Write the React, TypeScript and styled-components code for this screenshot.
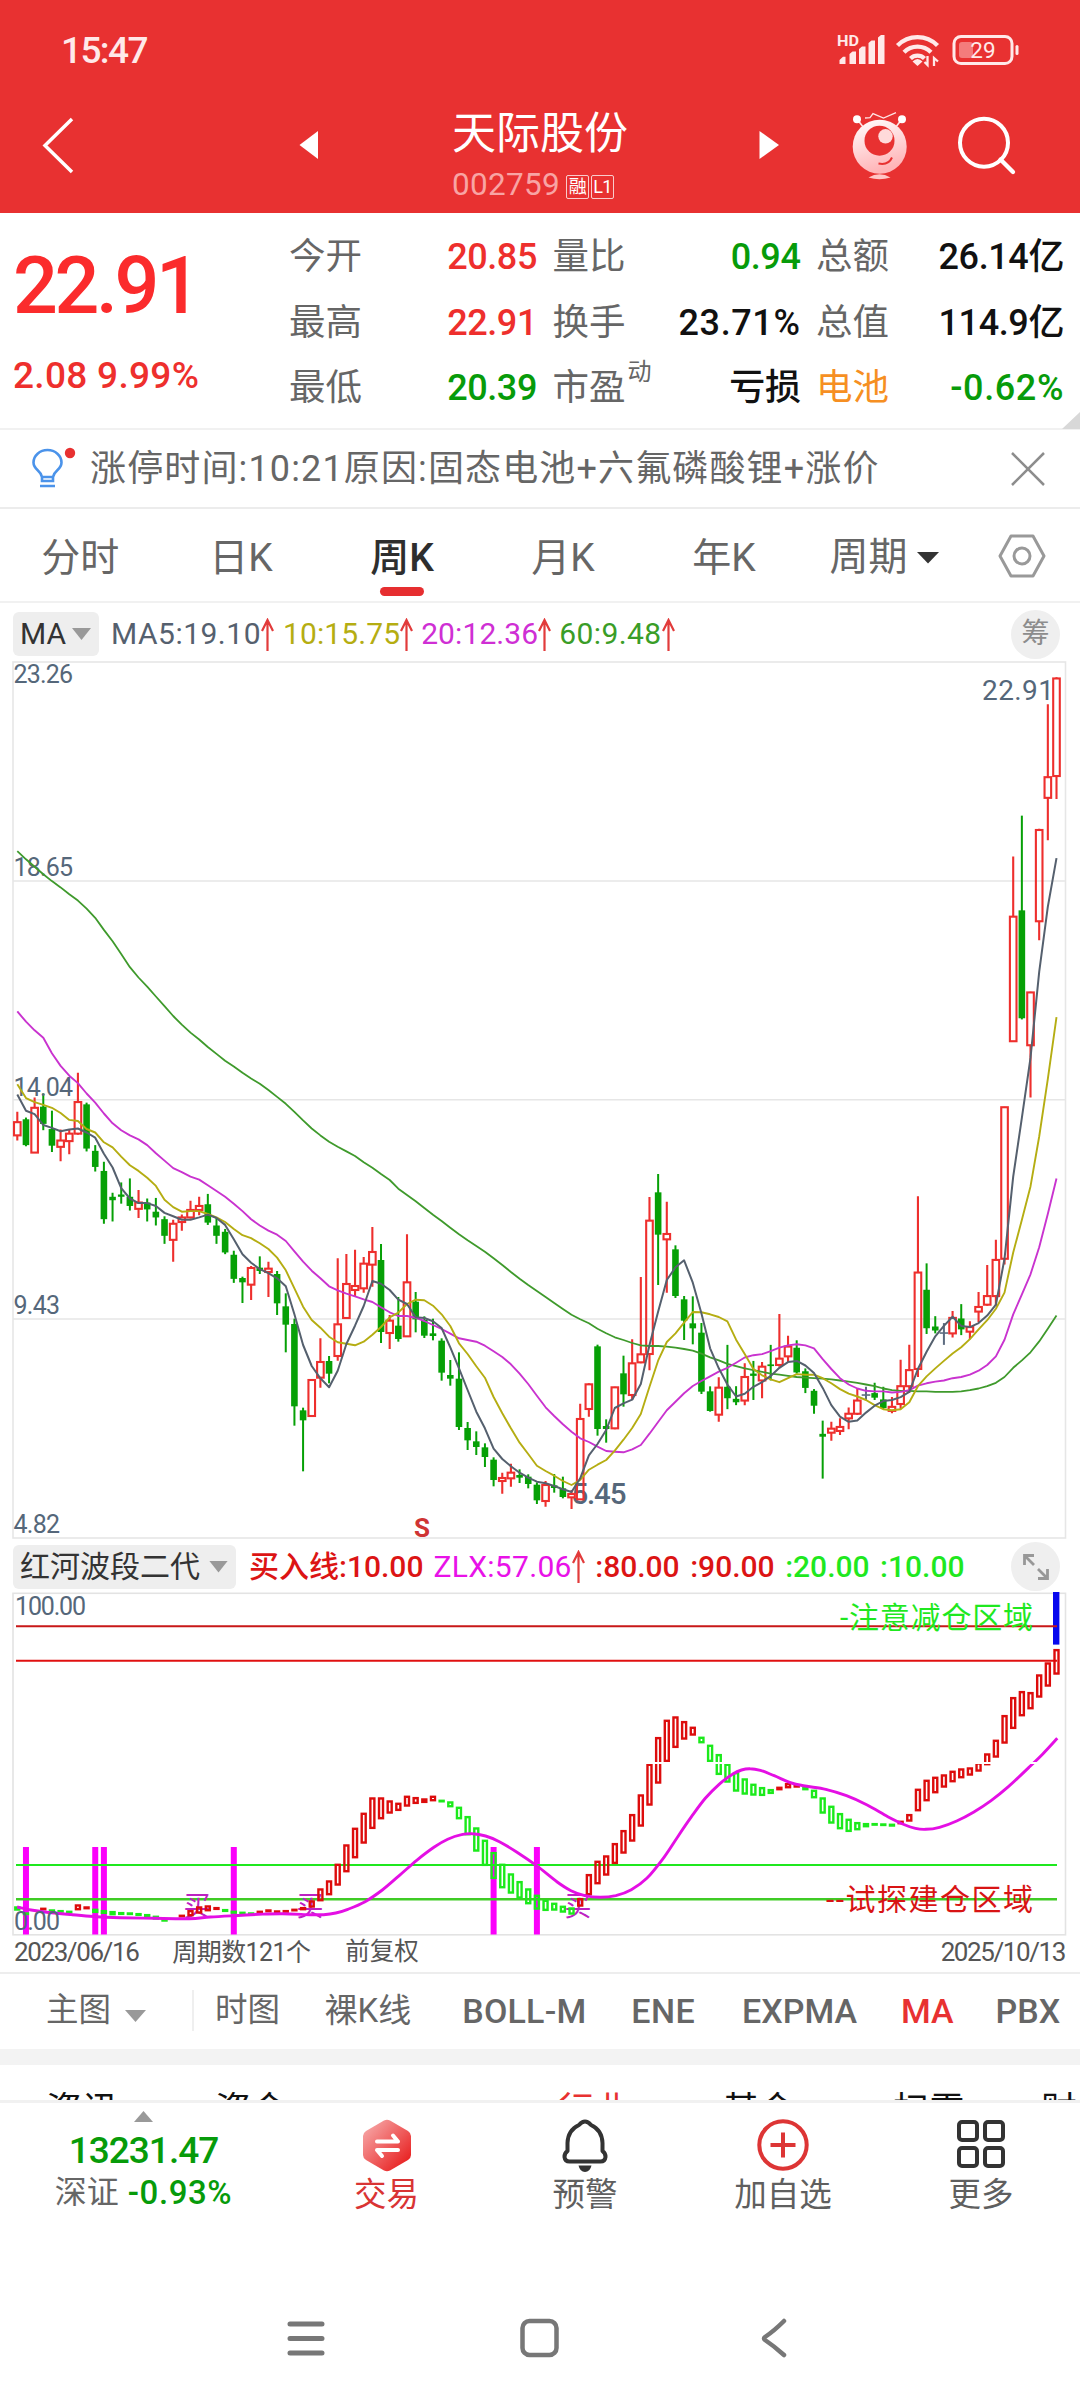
import React from "react";
import styled, { createGlobalStyle } from "styled-components";

const RED = "#e83131";
const UP = "#ee2f2d";
const DOWN = "#079b0a";
const SLATE = "#55606e";

const GlobalStyle = createGlobalStyle`
  * { box-sizing: border-box; }
  body { margin: 0; background: #fff; }
  body, svg text { font-family: Roboto, "Noto Sans CJK SC", sans-serif; }
`;

/* ---------- shared ---------- */

const Screen = styled.main`
  width: 1080px;
  height: 2400px;
  overflow: hidden;
  display: flex;
  flex-direction: column;
  background: #fff;
  color: #333;
  line-height: 1;
  white-space: nowrap;
`;

const Text = styled.span<{ $size: number; $color?: string; $ls?: number; $weight?: number; $left?: number }>`
  font-size: ${(p) => p.$size}px;
  color: ${(p) => p.$color ?? "inherit"};
  letter-spacing: ${(p) => p.$ls ?? 0}px;
  font-weight: ${(p) => p.$weight ?? 400};
  margin-left: ${(p) => p.$left ?? 0}px;
`;

const Caret = styled.i<{ $w: number; $h: number; $color: string; $up?: boolean }>`
  flex: none;
  width: ${(p) => p.$w}px;
  height: ${(p) => p.$h}px;
  background: ${(p) => p.$color};
  clip-path: ${(p) => (p.$up ? "polygon(50% 0, 100% 100%, 0 100%)" : "polygon(0 0, 100% 0, 50% 100%)")};
`;

/* ---------- header ---------- */

const Header = styled.header`
  flex: none;
  height: 213px;
  background: ${RED};
  color: #fff;
`;

const StatusBar = styled.div`
  height: 100px;
  padding: 0 59px 0 61px;
  display: flex;
  align-items: center;
  justify-content: space-between;
`;

const TitleBar = styled.div`
  height: 113px;
  display: grid;
  grid-template-columns: 299px 153px 176px 131px 321px;
`;

const BackCell = styled.div`
  padding: 16px 0 0 42px;
`;

const ArrowCell = styled.div`
  padding-top: 31px;
`;

const TitleCell = styled.div`
  display: flex;
  flex-direction: column;
  padding-top: 12px;
`;

const CodeRow = styled.div`
  display: flex;
  align-items: center;
  gap: 2px;
  margin-top: 13px;
  height: 31px;
`;

const Badge = styled.span`
  width: 23px;
  height: 24px;
  margin-top: 4px;
  border: 1.5px solid rgba(255, 255, 255, 0.75);
  border-radius: 2px;
  font-size: 18px;
  line-height: 21px;
  text-align: center;
  letter-spacing: -0.5px;
  color: #fff;
`;

/* ---------- quote ---------- */

const Quote = styled.section`
  flex: none;
  position: relative;
  height: 217px;
  padding-top: 11.5px;
  display: grid;
  grid-template-columns: 289px 775px;
  border-bottom: 2px solid #f1f1f1;
`;

const PriceBox = styled.div`
  color: #fb2b2c;
  padding: 22px 0 0 13px;
  display: flex;
  flex-direction: column;
  gap: 31px;
`;

const Stats = styled.div`
  display: grid;
  grid-template-columns: repeat(3, 248px);
  grid-auto-rows: 65.5px;
  column-gap: 15.5px;
`;

const Stat = styled.div`
  display: flex;
  align-items: center;
  justify-content: space-between;
  font-size: 36.5px;
`;

const StatLabel = styled.span<{ $color?: string }>`
  display: flex;
  color: ${(p) => p.$color ?? "#666"};
`;

const Superscript = styled.span`
  height: 24px;
  margin: -10px 0 0 2px;
  font-size: 24px;
`;

const StatValue = styled.span<{ $color: string; $ls: number }>`
  color: ${(p) => p.$color};
  font-size: 36px;
  font-weight: 500;
  letter-spacing: ${(p) => p.$ls}px;
`;

const Corner = styled.i`
  position: absolute;
  right: 0;
  bottom: -1px;
  width: 18px;
  height: 17px;
  background: #d8d8d8;
  clip-path: polygon(100% 0, 100% 100%, 0 100%);
`;

/* ---------- notice + period tabs ---------- */

const Notice = styled.section`
  flex: none;
  height: 79px;
  padding: 1px 34px 0 31px;
  display: flex;
  align-items: center;
  border-bottom: 2px solid #ececec;
  > svg:last-child { margin-left: auto; }
`;

const Periods = styled.nav`
  flex: none;
  height: 94px;
  display: grid;
  grid-template-columns: 160.5px 161px 161px 161px 161px 161px 114.5px;
  border-bottom: 2px solid #f1f1f1;
`;

const Period = styled.div<{ $active?: boolean }>`
  display: flex;
  flex-direction: column;
  align-items: center;
  padding-top: 30px;
  font-size: 39px;
  color: ${(p) => (p.$active ? "#2e2e2e" : "#666")};
  font-weight: ${(p) => (p.$active ? 500 : 400)};
  &::after {
    content: "";
    width: 44px;
    height: 9px;
    border-radius: 5px;
    margin-top: 9px;
    background: ${(p) => (p.$active ? "#e62e30" : "transparent")};
  }
`;

const PeriodMenu = styled.div`
  display: flex;
  align-items: center;
  gap: 9px;
  padding: 5px 0 0 25px;
  font-size: 39px;
  color: #666;
`;

const SettingCell = styled.div`
  display: flex;
  align-items: center;
  padding: 1px 0 0 32px;
`;

/* ---------- chart legends ---------- */

const Legend = styled.div<{ $h: number; $top: number }>`
  flex: none;
  height: ${(p) => p.$h}px;
  padding: ${(p) => p.$top}px 20px 0 13px;
  display: flex;
  align-items: center;
  > :last-child { margin-left: auto; }
`;

const Picker = styled.div<{ $w: number }>`
  width: ${(p) => p.$w}px;
  height: 44px;
  padding: 0 8px 0 7px;
  display: flex;
  align-items: center;
  justify-content: space-between;
  border-radius: 6px;
  background: #eee;
  font-size: 30px;
`;

const Round = styled.div`
  width: 49px;
  height: 49px;
  border-radius: 50%;
  background: #efefef;
  display: flex;
  align-items: center;
  justify-content: center;
  font-size: 28px;
  color: #8c8c8c;
`;

const Chart = styled.svg`
  flex: none;
  display: block;
  overflow: visible;
`;

const DateRow = styled.div`
  flex: none;
  height: 38px;
  padding: 0 15px 4px 14px;
  display: flex;
  align-items: center;
  color: #555;
  border-bottom: 2px solid #ededed;
  > :last-child { margin-left: auto; }
`;

/* ---------- lower tabs ---------- */

const Indicators = styled.nav`
  flex: none;
  height: 75px;
  display: flex;
  align-items: center;
  color: #666;
  padding-bottom: 2px;
`;

const MainPick = styled.div`
  width: 194px;
  height: 41px;
  padding-left: 46px;
  display: flex;
  align-items: center;
  gap: 14px;
  font-size: 32.5px;
  border-right: 2px solid #efefef;
  > i { margin-top: 11px; }
`;

const FirstTab = styled.div`
  width: 65px;
  margin-left: 21px;
  font-size: 32.5px;
`;

const Band = styled.div`
  flex: none;
  height: 16px;
  background: #f3f3f3;
`;

const Topics = styled.nav`
  flex: none;
  height: 35px;
  overflow: hidden;
  padding: 28px 0 0 46px;
  display: grid;
  grid-template-columns: 169px 343px 165px 170px 148px 80px;
  font-size: 36px;
  color: #111;
`;

const BottomBar = styled.footer`
  flex: none;
  height: 160px;
  border-top: 3px solid #f1f1f1;
  display: grid;
  grid-template-columns: 287px 199px 198px 198px 198px;
`;

const IndexCell = styled.div`
  display: flex;
  flex-direction: column;
  align-items: center;
  gap: 10px;
  padding-top: 8px;
`;

const IndexRow = styled.div`
  display: flex;
  align-items: center;
  margin-top: -4px;
  height: 34px;
`;

const Action = styled.div<{ $color?: string }>`
  display: flex;
  flex-direction: column;
  align-items: center;
  padding-top: 15px;
  font-size: 32.5px;
  color: ${(p) => p.$color ?? "#5f5f5f"};
  > svg { margin-bottom: 6px; }
`;

const SystemNav = styled.div`
  flex: none;
  height: 140px;
  padding: 57px 0 0 287px;
  display: grid;
  grid-template-columns: 38px 40px 28px;
  column-gap: 194px;
  > :last-child { margin-left: 6px; }
`;

/* ---------- chart data ---------- */

type Bar = [string, number, number, number, number];
const STEP = 8.66;
const X0 = 17.3;
const xAt = (i: number) => X0 + STEP * i;

/* Bars are stored in bands; each band has its own vertical origin and unit. */
type BandScale = { from: number; y0: number; k: number };
const CANDLES: (BandScale & { rows: string })[] = [
  {
    from: 0, y0: 640, k: 0.574,
    rows: "R 822 840 863 872;G 832 835 880 882;R 797 815 893 893;G 790 813 843 854;G 820 852 881 892;R 853 872 883 908;R 853 860 873 896;R 754 805 860 862;G 806 809 886 891;G 880 890 918 926;G 909 925 1009 1017;G 963 970 976 1013;G 945 966 970 982;G 938 970 986 994;R 958 980 991 1007;G 973 980 992 1013;G 972 996 1006 1020;G 1004 1009 1038 1052;R 1010 1017 1045 1083;R 1001 1006 1014 1029;R 977 993 1006 1008;R 970 986 993 1002;G 965 983 1015 1019;G 1007 1020 1038 1052;G 1026 1031 1067 1070;G 1064 1071 1113 1120",
  },
  {
    from: 26, y0: 1160, k: 1 / 3,
    rows: "G 350 354 367 429;R 318 324 374 420;G 289 323 333 342;R 305 326 336 411;G 333 342 430 465;G 400 439 494 577;G 476 492 739 797;G 743 751 781 934;R 657 660 768 768;R 535 606 653 683;G 588 603 641 670;R 295 493 588 602;R 282 372 474 475;R 269 378 390 411;R 291 311 385 398;R 201 276 314 380;G 252 300 516 549;R 465 482 519 567;G 411 497 537 545;R 223 367 529 531;G 396 425 478 517",
  },
  {
    from: 47, y0: 1100, k: 1 / 3,
    rows: "G 649 660 707 714;G 656 700 708 721;G 715 722 818 842;G 780 825 836 857;G 757 836 981 990;G 966 984 1021 1050;G 994 1024 1041 1065;G 1030 1042 1071 1101;G 1072 1079 1140 1159;R 1118 1134 1143 1181;R 1091 1118 1135 1160;G 1108 1125 1133 1149;G 1123 1130 1152 1165;G 1147 1154 1201 1212;R 1143 1155 1203 1220;G 1122 1156 1164 1178;G 1130 1165 1191 1195;R 1170 1182 1192 1227;R 911 957 1198 1200;R 850 853 927 950;G 734 739 987 1007;G 958 978 987 1028;R 860 862 985 988;G 767 820 883 920;R 718 790 885 900;R 531 763 787 790;R 291 362 762 811;G 222 277 404 555;R 305 402 418 578;G 436 448 588 594;G 588 598 662 720;G 589 670 685 733;G 669 698 875 882;G 859 874 933 935;R 832 863 944 965",
  },
  {
    from: 82, y0: 640, k: 0.574,
    rows: "G 1228 1301 1321 1340;G 1300 1322 1328 1333;R 1260 1284 1325 1333;G 1256 1278 1282 1324;R 1258 1266 1290 1321;G 1228 1262 1265 1290;R 1174 1252 1263 1266;R 1212 1231 1248 1258;G 1220 1233 1276 1278;G 1269 1274 1303 1312;G 1305 1308 1334 1348;G 1360 1383 1388 1461;R 1362 1374 1381 1395;R 1356 1371 1378 1385;R 1337 1348 1356 1375;R 1303 1325 1348 1350;S 1301 1314 1315 1324;G 1294 1312 1320 1324;G 1301 1323 1338 1340;R 1319 1336 1343 1347;R 1254 1300 1331 1340;R 1228 1272 1300 1312;R 969 1102 1270 1284;G 1086 1132 1199 1209;G 1178 1196 1203 1208;S 1190 1206 1207 1228;R 1169 1181 1208 1215;G 1157 1182 1201 1211;R 1187 1197 1205 1218;R 1136 1162 1170 1188;R 1089 1143 1158 1160;R 1045 1080 1143 1160;R 813 814 1078 1088;R 377 482 699 700;G 306 471 659 661;R 613 614 706 797;R 329 331 490 523;R 112 239 275 349;R 65 67 237 277",
  },
];

const LINES: { color: string; w: number; bands: (BandScale & { v: number[] })[] }[] = [
  {
    color: "#3f9a2c", w: 1.8,
    bands: [
      { from: 0, y0: 640, k: 0.574, v: [368,382,395,408,420,431,443,454,468,484,505,525,547,570,588,604,621,638,655,670,684,696,709,721,733,743,754,764,773,784,796,808,822,837,851,863,874,883,891,899] },
      { from: 40, y0: 1100, k: 1 / 3, v: [187,203,222,240,266,285,304,324,344,363,383,403,421,438,455,475,495,516,536,555,573,591,609,627,644,658,670,686,700,712,720,729,736,738,738,740,743,747,752,761,772,781] },
      { from: 82, y0: 640, k: 0.574, v: [1261,1265,1269,1272,1275,1278,1280,1282,1284,1285,1286,1287,1288,1290,1292,1294,1297,1300,1304,1307,1308,1308,1309,1309,1310,1310,1310,1309,1307,1304,1300,1294,1284,1268,1255,1241,1222,1200,1177] },
    ],
  },
  {
    color: "#c933cf", w: 1.9,
    bands: [
      { from: 0, y0: 640, k: 0.574, v: [647,665,680,693,720,742,759,772,790,806,825,842,854,863,870,880,894,907,920,927,935,940,950,960,970,982,995,1009,1020,1029,1036,1047] },
      { from: 32, y0: 1160, k: 1 / 3, v: [274,305,332,355,379,391,401,409,418,426,442,457,468,468,473] },
      { from: 47, y0: 1100, k: 1 / 3, v: [663,675,687,701,715,720,725,737,754,771,793,821,852,887,922,948,973,995,1015,1026,1040,1053,1055,1057,1048,1035,1001,966,931,905,880,858,843,829,815] },
      { from: 82, y0: 640, k: 0.574, v: [1268,1259,1250,1246,1244,1239,1233,1229,1227,1229,1234,1253,1270,1286,1297,1304,1308,1309,1309,1311,1310,1307,1299,1295,1292,1290,1286,1284,1280,1273,1263,1248,1219,1175,1140,1105,1058,1000,938] },
    ],
  },
  {
    color: "#b5ad12", w: 1.9,
    bands: [
      { from: 0, y0: 640, k: 0.574, v: [774,798,805,810,815,824,836,838,852,858,875,884,900,915,925,937,951,975,988,996,995,995,1000,1006,1014,1026,1037,1042,1051,1061,1076,1098] },
      { from: 32, y0: 1160, k: 1 / 3, v: [385,440,480,503,530,547,551,556,545,524,501,472,458,432,419] },
      { from: 47, y0: 1100, k: 1 / 3, v: [601,617,643,678,730,762,799,833,891,940,985,1028,1062,1097,1113,1127,1143,1155,1140,1109,1094,1080,1052,1019,984,942,860,782,726,700,668,636,637,643,651] },
      { from: 82, y0: 640, k: 0.574, v: [1187,1219,1244,1270,1281,1288,1293,1286,1279,1280,1280,1286,1295,1305,1313,1318,1324,1333,1340,1342,1340,1328,1300,1283,1269,1256,1243,1232,1218,1201,1185,1165,1137,1067,1010,952,865,765,657] },
    ],
  },
  {
    color: SLATE, w: 2,
    bands: [
      { from: 0, y0: 640, k: 0.574, v: [792,820,826,845,850,856,853,851,858,867,895,919,955,973,981,981,986,998,1004,1010,1010,1006,1001,1007,1019,1044,1070,1085,1096,1103,1112,1126] },
      { from: 32, y0: 1160, k: 1 / 3, v: [463,555,618,655,682,632,552,497,438,363,371,390,419,432,472] },
      { from: 47, y0: 1100, k: 1 / 3, v: [654,664,684,742,805,870,935,985,1046,1077,1099,1118,1133,1145,1150,1158,1168,1176,1135,1066,1032,990,924,910,899,852,735,635,540,502,481,548,640,745,805] },
      { from: 82, y0: 640, k: 0.574, v: [1297,1318,1313,1301,1293,1282,1268,1258,1256,1264,1277,1303,1333,1353,1362,1360,1346,1334,1326,1324,1319,1310,1270,1240,1213,1195,1179,1195,1197,1190,1177,1158,1078,935,832,728,578,465,380] },
    ],
  },
];

const CANDLE_COLOR: Record<string, string> = { R: UP, G: "#06a006", S: "#5d6c80" };

const linePath = (bands: (BandScale & { v: number[] })[]) =>
  bands.flatMap((b) => b.v.map((v, j) => `${xAt(b.from + j).toFixed(1)},${(b.y0 + v * b.k).toFixed(1)}`)).join(" ");

function Candle({ i, bar, b }: { i: number; bar: Bar; b: BandScale }) {
  const [type, hi, top, bot, lo] = bar;
  const x = xAt(i);
  const [h, t, o, l] = [hi, top, bot, lo].map((v) => b.y0 + v * b.k);
  const c = CANDLE_COLOR[type];
  if (type === "R")
    return (
      <g stroke={c} strokeWidth={2.1} fill="none">
        <path d={`M${x} ${h}V${t}M${x} ${o}V${l}`} />
        <rect x={x - 3.3} y={t} width={6.6} height={Math.max(o - t, 1)} />
      </g>
    );
  return (
    <g>
      <rect x={x - 1} y={h} width={2} height={l - h} fill={c} />
      <rect x={x - (type === "S" ? 4.3 : 3.3)} y={t} width={type === "S" ? 8.6 : 6.6} height={Math.max(o - t, 1.6)} fill={c} />
    </g>
  );
}

function PriceChart() {
  const labels: [string, number, number][] = [
    ["23.26", 683, 59.5], ["18.65", 876, 59.5], ["14.04", 1095.5, 59.5], ["9.43", 1314, 46.5], ["4.82", 1533, 46.5],
  ];
  return (
    <Chart width={1080} height={880} viewBox="0 660 1080 880">
      <g stroke="#e6e6e6" strokeWidth={1.6} fill="none">
        <rect x={13} y={662} width={1052.5} height={876} />
        <path d="M13 881H1065M13 1099.8H1065M13 1319H1065" />
      </g>
      <text x={571.5} y={1504} fontSize={29.5} textLength={55} fill="#55677a" fontWeight={500}>5.45</text>
      {CANDLES.map((b) =>
        b.rows.split(";").map((row, j) => {
          const [t, ...n] = row.split(" ");
          return <Candle key={b.from + j} i={b.from + j} b={b} bar={[t, ...n.map(Number)] as Bar} />;
        })
      )}
      {labels.map(([t, y, w]) => (
        <text key={t} x={13.5} y={y} fontSize={25} textLength={w} fill="#55677a">{t}</text>
      ))}
      {LINES.map((l) => (
        <polyline key={l.color} points={linePath(l.bands)} fill="none" stroke={l.color} strokeWidth={l.w} strokeLinejoin="round" />
      ))}
      <text x={982} y={700} fontSize={28} textLength={72} fill="#55677a">22.91</text>
      <text x={414} y={1537} fontSize={26} fontWeight={700} fill="#cf3434">S</text>
    </Chart>
  );
}

const WAVE =
  "0G 1130 1141;1G 1148 1154;3R 1134 1140;4G 1139 1145;5G 1141 1146;6G 1143 1148;7R 1124 1140;8R 1130 1137;9G 1137 1148;10G 1141 1151;11G 1144 1155;12G 1147 1154;13G 1148 1154;14G 1150 1157;15G 1153 1160;16G 1158 1168;17G 1166 1174;19R 1155 1161;20R 1141 1158;21R 1130 1150;22R 1127 1143;23R 1132 1139;24G 1138 1145;25G 1143 1150;26G 1146 1152;27G 1148 1153;28R 1143 1149;29R 1139 1146;30R 1142 1148;31R 1141 1146;32R 1137 1143;33R 1132 1140;34R 1112 1132;35R 1076 1113;36R 1052 1095;37R 1002 1066;38R 944 1026;39R 894 984;40R 849 940;41R 803 896;42R 803 867;43R 812 850;44R 819 842;45R 798 829;46R 802 821;47R 806 818;48R 798 813;49G 810 816;50G 815 831;51G 831 867;52G 859 915;53G 893 964;54G 930 1007;55G 967 1046;56G 1002 1074;57G 1031 1090;58G 1054 1105;59G 1076 1122;60G 1095 1138;61G 1110 1142;62G 1119 1141;63G 1128 1147;64G 1133 1153;65R 1105 1129;66R 1033 1095;67R 993 1062;68R 977 1036;69R 940 1001;70R 901 970;71R 853 934;72R 794 889;73R 702 826;74R 622 760;75R 570 695;76R 560 653;77R 574 628;78R 591 616;79G 621 639;80G 645 695;81G 673 734;82G 702 757;83G 727 784;84G 746 793;85G 762 796;86G 772 797;87G 778 791;88R 771 780;89R 760 774;90R 764 772;91G 770 780;92G 780 804;93G 803 850;94G 828 880;95G 850 897;96G 867 905;97G 877 900;98G 880 891;99G 880 886;100G 881 887;101G 882 889;102R 873 882;103R 853 874;104R 777 843;105R 750 813;106R 741 789;107R 734 772;108R 723 756;109R 716 744;110R 713 736;111R 698 724;112R 671 705;113R 630 682;114R 556 640;115R 502 596;116R 484 558;117R 487 537;118R 434 502;119R 398 469;120R 358 433";

const ZLX: [number, number][] = [
  [50,1131],[90,1140],[130,1146],[210,1154],[280,1160],[350,1163],[450,1165],[550,1166],[610,1161],[680,1157],[750,1153],[820,1151],[900,1154],[940,1154],[975,1149],[1010,1138],[1060,1115],[1110,1080],[1160,1036],[1210,991],[1260,952],[1300,928],[1340,914],[1372,911],[1410,918],[1450,935],[1500,966],[1558,1007],
  [1618,1056],[1658,1082],[1698,1097],[1743,1102],[1788,1097],[1833,1079],[1878,1045],[1928,982],[1968,920],[2008,860],[2048,805],[2088,763],[2128,732],[2153,720],[2178,716],[2208,721],[2248,737],[2298,759],[2338,768],[2398,778],[2458,797],[2518,825],[2578,860],[2628,885],[2658,895],[2688,898],[2728,892],[2778,873],[2828,846],[2878,812],[2928,770],[2988,712],[3028,672],[3070,625],
];

const zlxPath = (() => {
  const p = ZLX.map(([x, y]) => [x / 2.9037, 1530 + y / 3]);
  let d = `M${p[0][0].toFixed(1)} ${p[0][1].toFixed(1)}`;
  for (let i = 0; i < p.length - 1; i++) {
    const a = p[Math.max(i - 1, 0)], b = p[i], c = p[i + 1], e = p[Math.min(i + 2, p.length - 1)];
    const n = [b[0] + (c[0] - a[0]) / 6, b[1] + (c[1] - a[1]) / 6, c[0] - (e[0] - b[0]) / 6, c[1] - (e[1] - b[1]) / 6, c[0], c[1]];
    d += "C" + n.map((v) => v.toFixed(1)).join(" ");
  }
  return d;
})();

function WaveChart() {
  const bars = WAVE.split(";").map((s) => {
    const [, i, c, t, b] = s.match(/^(\d+)([RG]) (\d+) (\d+)$/)!;
    return { i: +i, c, t: 1530 + +t / 3, b: 1530 + +b / 3 };
  });
  return (
    <Chart width={1080} height={346} viewBox="0 1590 1080 346">
      <rect x={13} y={1593.3} width={1052.5} height={341.5} fill="none" stroke="#e3e3e3" strokeWidth={1.6} />
      {[1, 9, 10, 25, 55, 60].map((i) => (
        <rect key={i} x={xAt(i) - 3} y={1847} width={6} height={87.5} fill="#fb00fb" />
      ))}
      <rect x={1053} y={1592} width={6.4} height={52.6} fill="#0808ee" />
      <g strokeWidth={2} fill="none">
        <path d="M16 1626.3H1057" stroke="#c81818" />
        <path d="M16 1660.7H1057" stroke="#e01010" />
        <path d="M16 1865H1057" stroke="#1fe81f" />
        <path d="M16 1899.3H1057" stroke="#3fcb25" strokeWidth={2.6} />
      </g>
      <g fontSize={27} fill="#bd22c2">
        {[197, 310, 578].map((x) => (
          <text key={x} x={x} y={1916} textAnchor="middle">买</text>
        ))}
      </g>
      {bars.map((b) => (
        <rect key={b.i} x={xAt(b.i) - 2} y={b.t + 0.8} width={4} height={Math.max(b.b - b.t - 1.6, 0.5)} fill="none" stroke={b.c === "R" ? "#dd0c0c" : "#1bea1b"} strokeWidth={2.4} />
      ))}
      <rect x={620} y={1762} width={430} height={2} fill="#fff" />
      <path d={zlxPath} fill="none" stroke="#e40fe4" strokeWidth={2.9} />
      <rect x={1030} y={1762} width={10} height={2} fill="#fff" />
      <g fontSize={25} fill="#55677a">
        <text x={15} y={1615} textLength={71}>100.00</text>
        <text x={14} y={1930} textLength={46}>0.00</text>
      </g>
      <g fontSize={30}>
        <text x={840} y={1627.5} textLength={193} fill="#1fe81f">-注意减仓区域</text>
        <text x={826} y={1910} textLength={207} fill="#d81414">--试探建仓区域</text>
      </g>
    </Chart>
  );
}

/* ---------- icons ---------- */

const RiseArrow = () => (
  <svg width="13" height="33" viewBox="0 0 13 33" fill="none" stroke="#e23b3b" strokeWidth="2.2">
    <path d="M6.5 33V2M1 13L6.5 2L12 13" />
  </svg>
);

const StatusIcons = () => (
  <svg width="184" height="40" viewBox="0 0 184 40" fill="#ffe9e9" stroke="none">
    <text x="0" y="15.5" fontSize="15.500" fontWeight="700" textLength="22" lengthAdjust="spacingAndGlyphs">HD</text>
    <path d="M2.500 34V30l3.500-3.200h2.500V34zM12.500 34V24l3-2.500h3.500V34zM22 34V19l3-2.500h3.500V34zM31.500 34V13l3-2.500h3.500V34zM41 34V7.500l3-2.500h3.500V34z" />
    <g fill="none" stroke="#ffe9e9" strokeWidth="4.300">
      <path d="M60.500 15.500a28 28 0 0 1 40 0" />
      <path d="M67 22.300a19 19 0 0 1 27 0" />
      <path d="M73.500 28.500a10 10 0 0 1 14 0" />
    </g>
    <path d="M80.500 36L75.500 31.500Q80.500 26.500 85.500 31.500z" />
    <path d="M90.500 26v9l-3-3M97 36v-8l4 3.500" fill="none" stroke="#ffe9e9" strokeWidth="2.300" />
    <rect x="117" y="6.500" width="58" height="27" rx="7" fill="none" stroke="#ffe9e9" strokeWidth="3" />
    <rect x="122" y="12" width="14" height="16" rx="3" fill="#f47c7c" />
    <rect x="178.500" y="15" width="3" height="10" rx="1.500" />
    <text x="146" y="28" fontSize="22.500" textAnchor="middle">29</text>
  </svg>
);

const HeaderIcons = () => (
  <svg width="321" height="113" viewBox="759 100 321 113" fill="none">
    <defs>
      <linearGradient id="face" x1="0" y1="0" x2="0.3" y2="1">
        <stop offset="0" stopColor="#fff" />
        <stop offset="1" stopColor="#ffb5b8" />
      </linearGradient>
    </defs>
    <path d="M759.500 131L779 145L759.500 159z" fill="#fff" />
    <g stroke="#ffe3e3" strokeWidth="1.600">
      <path d="M857 119L863.500 127.500M902 119L895.500 127.500" />
      <path d="M865 118L870 117.700L873 113.600L883.500 118L896 112.600" strokeWidth="1.300" />
    </g>
    <circle cx="857" cy="119.300" r="4" fill="#fff" />
    <circle cx="902" cy="119.300" r="4" fill="#fff" />
    <circle cx="879.700" cy="146.700" r="27" fill="url(#face)" />
    <circle cx="879.500" cy="140.700" r="15" fill={RED} />
    <circle cx="885.500" cy="136.300" r="7.200" fill="#ffdada" />
    <path d="M878.500 163.500Q888.500 165.500 892 157.500" stroke={RED} strokeWidth="2" />
    <path d="M868.500 177.500Q879.500 171 890.500 177.500Q879.500 181 868.500 177.500z" fill="#ffc6c6" />
    <circle cx="984" cy="142.700" r="24" stroke="#fff" strokeWidth="4" />
    <path d="M1000.500 159.500L1013 172" stroke="#fff" strokeWidth="4.300" strokeLinecap="round" />
  </svg>
);

const stats: [string, string, string, string?, string?][] = [
  ["今开", "20.85", UP], ["量比", "0.94", DOWN], ["总额", "26.14亿", "#111"],
  ["最高", "22.91", UP], ["换手", "23.71%", "#111"], ["总值", "114.9亿", "#111"],
  ["最低", "20.39", DOWN], ["市盈", "亏损", "#111", undefined, "动"], ["电池", "-0.62%", DOWN, "#f68f22"],
];

export default function App() {
  return (
    <Screen>
      <GlobalStyle />
      <Header>
        <StatusBar>
          <Text $size={37} $ls={-1.6} $color="#ffe9e9" $weight={500}>15:47</Text>
          <StatusIcons />
        </StatusBar>
        <TitleBar>
          <BackCell>
            <svg width="34" height="60" viewBox="0 0 34 60" fill="none" stroke="#fff" strokeWidth="3.500">
              <path d="M30 3L3 29.500L30 56" />
            </svg>
          </BackCell>
          <ArrowCell>
            <svg width="20" height="28" viewBox="0 0 20 28" fill="#fff"><path d="M19 0V28L0.500 14z" /></svg>
          </ArrowCell>
          <TitleCell>
            <Text $size={44}>天际股份</Text>
            <CodeRow>
              <Text $size={31.5} $color="#f8a4a4" $ls={0.3}>002759</Text>
              <Text as="i" $size={1} $left={2} />
              <Badge>融</Badge>
              <Badge>L1</Badge>
            </CodeRow>
          </TitleCell>
          <div />
          <HeaderIcons />
        </TitleBar>
      </Header>

      <Quote>
        <PriceBox>
          <Text $size={79} $ls={-3.4} $weight={500}>22.91</Text>
          <Text $size={37} $ls={0.3} $color={UP} $weight={500}>2.08 9.99%</Text>
        </PriceBox>
        <Stats>
          {stats.map(([label, value, color, labelColor, sup]) => (
            <Stat key={label}>
              <StatLabel $color={labelColor}>{label}{sup && <Superscript>{sup}</Superscript>}</StatLabel>
              <StatValue $color={color} $ls={value.endsWith("%") ? 0.6 : -0.4}>{value}</StatValue>
            </Stat>
          ))}
        </Stats>
        <Corner />
      </Quote>

      <Notice>
        <svg width="46" height="44" viewBox="0 0 46 44" fill="none" stroke="#4b93ea" strokeWidth="2.600">
          <path d="M11 30C10 23 2.500 23 2.500 15.500a14 12.500 0 0 1 28 0C30.500 23 23 23 22 30v4H11zM10 30H23M9 39H24" />
          <circle cx="39" cy="6" r="5.200" fill="#e83131" stroke="none" />
        </svg>
        <Text $size={36} $left={13} $ls={1.14} $color="#666">涨停时间:10:21原因:固态电池+六氟磷酸锂+涨价</Text>
        <svg width="36" height="36" viewBox="0 0 36 36" stroke="#8d8d8d" strokeWidth="2.500"><path d="M2 2L34 34M34 2L2 34" /></svg>
      </Notice>

      <Periods>
        {["分时", "日K", "周K", "月K", "年K"].map((p) => (
          <Period key={p} $active={p === "周K"}>{p}</Period>
        ))}
        <PeriodMenu>
          周期
          <Caret $w={23} $h={12} $color="#333" />
        </PeriodMenu>
        <SettingCell>
          <svg width="48" height="44" viewBox="0 0 48 44" fill="none" stroke="#999" strokeWidth="3">
            <path d="M13 2H35L46 22L35 42H13L2 22z" strokeLinejoin="round" />
            <circle cx="24" cy="22" r="8" />
          </svg>
        </SettingCell>
      </Periods>

      <Legend $h={57} $top={5}>
        <Picker $w={86}>MA<Caret $w={19} $h={12} $color="#999" /></Picker>
        <Text $size={30} $left={12} $ls={0.5} $color={SLATE}>MA5:19.10</Text><RiseArrow />
        <Text $size={30} $left={9} $ls={0.1} $color="#b5ad12">10:15.75</Text><RiseArrow />
        <Text $size={30} $left={8} $ls={0.1} $color="#cf2fd4">20:12.36</Text><RiseArrow />
        <Text $size={30} $left={8} $ls={0.4} $color="#3a9d27">60:9.48</Text><RiseArrow />
        <Round>筹</Round>
      </Legend>

      <PriceChart />

      <Legend $h={50} $top={3}>
        <Picker $w={223}>红河波段二代<Caret $w={19} $h={12} $color="#999" /></Picker>
        <Text $size={30} $left={13} $color="#dc1414" $weight={500}>买入线:10.00</Text>
        <Text $size={30} $left={10} $ls={0.3} $color="#e812e8">ZLX:57.06</Text><RiseArrow />
        <Text $size={30} $left={10.5} $color="#dc1414" $weight={500}>:80.00</Text>
        <Text $size={30} $left={10.5} $color="#dc1414" $weight={500}>:90.00</Text>
        <Text $size={30} $left={10.5} $color="#1fe81f" $weight={500}>:20.00</Text>
        <Text $size={30} $left={10.5} $color="#1fe81f" $weight={500}>:10.00</Text>
        <Round>
          <svg width="28" height="28" viewBox="0 0 28 28" fill="none" stroke="#989898" strokeWidth="2.800">
            <path d="M12 2.500H2.500V12M2.500 2.500L12 12M16 25.500H25.500V16M25.500 25.500L16 16" />
          </svg>
        </Round>
      </Legend>

      <WaveChart />

      <DateRow>
        <Text $size={26} $ls={-1.4}>2023/06/16</Text>
        <Text $size={25} $left={34} $ls={-0.6}>周期数121个</Text>
        <Text $size={24.5} $left={35}>前复权</Text>
        <Text $size={26} $ls={-1.4}>2025/10/13</Text>
      </DateRow>

      <Indicators>
        <MainPick>主图<Caret $w={21} $h={12} $color="#999" /></MainPick>
        <FirstTab>时图</FirstTab>
        <Text $size={33} $left={44.5}>裸K线</Text>
        <Text $size={34} $left={51} $weight={500} $ls={0.2}>BOLL-M</Text>
        <Text $size={34} $left={45} $weight={500} $ls={0.4}>ENE</Text>
        <Text $size={34} $left={47} $weight={500}>EXPMA</Text>
        <Text $size={34} $left={44} $weight={500} $color={RED}>MA</Text>
        <Text $size={34} $left={42} $weight={500}>PBX</Text>
      </Indicators>
      <Band />
      <Topics>
        <span>资讯</span>
        <span>资金</span>
        <Text $size={36} $color={RED}>行业</Text>
        <span>基金</span>
        <span>扫雷</span>
        <span>财务</span>
      </Topics>

      <BottomBar>
        <IndexCell>
          <Caret $w={19} $h={11} $color="#999" $up />
          <Text $size={37} $ls={-1} $color={DOWN} $weight={500}>13231.47</Text>
          <IndexRow>
            <Text $size={32} $color="#666">深证</Text>
            <Text $size={33} $left={9} $ls={0.6} $color={DOWN} $weight={500}>-0.93%</Text>
          </IndexRow>
        </IndexCell>
        <Action $color="#d93434">
          <svg width="50" height="55" viewBox="0 0 50 55">
            <defs>
              <linearGradient id="hex" x1="0.1" y1="0.1" x2="0.9" y2="0.9">
                <stop offset="0" stopColor="#f6a3a3" />
                <stop offset="1" stopColor="#e81f1f" />
              </linearGradient>
            </defs>
            <path d="M22 2.500Q25 1 28 2.500L46 13Q49 15 49 18V37Q49 40 46 42L28 52.500Q25 54 22 52.500L4 42Q1 40 1 37V18Q1 15 4 13z" fill="url(#hex)" />
            <path d="M15 23.500H36L31 17.500M36 32H15L20 38" stroke="#fff" strokeWidth="4" fill="none" strokeLinecap="round" strokeLinejoin="round" />
          </svg>
          交易
        </Action>
        <Action>
          <svg width="46" height="55" viewBox="0 0 46 55" fill="none" stroke="#333" strokeWidth="4" strokeLinejoin="round">
            <path d="M17 7Q23 0 29 7Q40 12 40.500 25V33Q43.500 35 43.500 39Q43 43.500 38.500 43.500H7.500Q3 43.500 2.500 39Q2.500 35 5.500 33V25Q6 12 17 7z" />
            <path d="M16.500 47.500H29.500Q28 54 23 54Q18 54 16.500 47.500z" fill="#333" stroke="none" />
          </svg>
          预警
        </Action>
        <Action>
          <svg width="52" height="55" viewBox="0 0 52 55" fill="none" stroke="#dd3535" strokeWidth="4">
            <circle cx="26" cy="27" r="23.700" />
            <path d="M26 14.500V39.500M13.500 27H38.500" />
          </svg>
          加自选
        </Action>
        <Action>
          <svg width="48" height="55" viewBox="0 0 48 55" fill="none" stroke="#333" strokeWidth="4">
            <rect x="2" y="4" width="18" height="18" rx="3" />
            <rect x="28" y="4" width="18" height="18" rx="3" />
            <rect x="2" y="30" width="18" height="18" rx="3" />
            <rect x="28" y="30" width="18" height="18" rx="3" />
          </svg>
          更多
        </Action>
      </BottomBar>

      <SystemNav>
        <svg width="38" height="44" viewBox="0 0 38 44" stroke="#777" strokeWidth="5" strokeLinecap="round"><path d="M3 7H35M3 21.500H35M3 36H35" /></svg>
        <svg width="40" height="44" viewBox="0 0 40 44" fill="none" stroke="#777" strokeWidth="4.500"><rect x="3.500" y="4" width="34" height="34" rx="7" /></svg>
        <svg width="28" height="44" viewBox="0 0 28 44" fill="none" stroke="#777" strokeWidth="4.500" strokeLinecap="round"><path d="M25 4Q15 14 6 20Q4 21.500 6 23Q15 29 25 38" /></svg>
      </SystemNav>
    </Screen>
  );
}
